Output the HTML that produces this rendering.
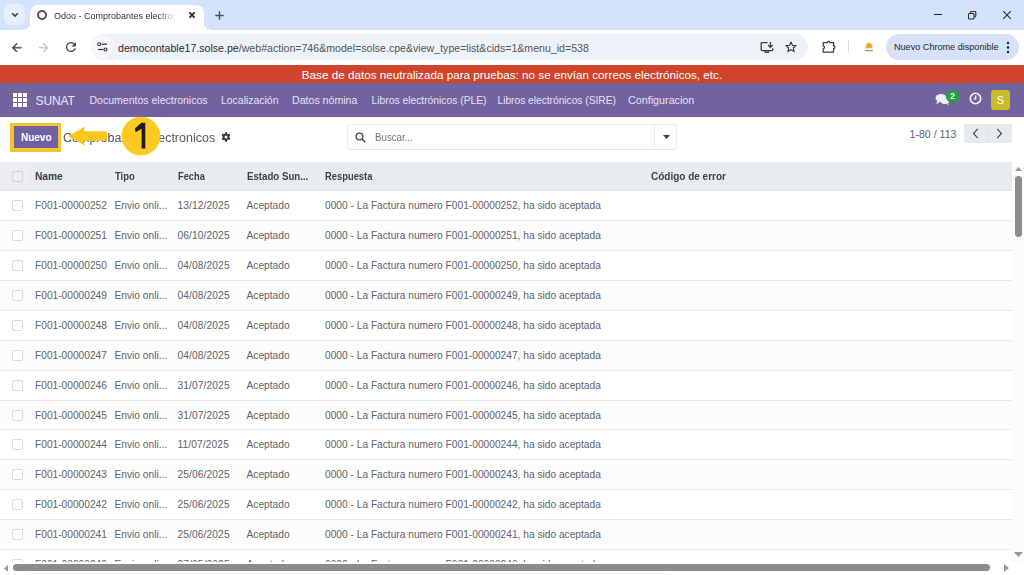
<!DOCTYPE html>
<html><head><meta charset="utf-8">
<style>
*{box-sizing:border-box;margin:0;padding:0}
html,body{width:1024px;height:575px;overflow:hidden;background:#fff;font-family:"Liberation Sans",sans-serif}
.a{position:absolute;white-space:nowrap}
#tabstrip{position:absolute;left:0;top:0;width:1024px;height:30px;background:#d3e3fd}
#toolbar{position:absolute;left:0;top:30px;width:1024px;height:34px;background:#fff}
#banner{position:absolute;left:0;top:65px;width:1024px;height:18px;background:#d0442c;color:#fff;font-size:11.7px;line-height:18px;padding-top:0.5px;text-align:center}
#nav{position:absolute;left:0;top:83px;width:1024px;height:34px;background:#71639e;color:#fff}
#nav .m{position:absolute;top:0px;line-height:34px;font-size:10.5px;color:#e6e1f3}
#cp{position:absolute;left:0;top:117px;width:1024px;height:45px;background:#fff}
#thead{position:absolute;left:0;top:162px;width:1012px;height:29px;background:#e9ecef;border-bottom:1px solid #dee2e6}
.th{position:absolute;top:-0.5px;line-height:29px;font-size:10.2px;font-weight:700;color:#3b414b}
.row{position:absolute;left:0;width:1012px;height:30px;border-bottom:1px solid #e8e9eb}
.row.odd{background:#fcfcfc}
.td{position:absolute;top:0;line-height:29px;font-size:10.2px;color:#5e636c}
.cb{position:absolute;left:12px;width:11px;height:11px;border:1px solid #d8dadd;border-radius:2px;background:#fff}
</style></head><body>
<div id="tabstrip">
  <!-- tab search button -->
  <div class="a" style="left:4px;top:4px;width:21px;height:21px;border-radius:6px;background:#e7effc"></div>
  <svg class="a" style="left:11px;top:12px" width="8" height="6" viewBox="0 0 8 6"><path d="M1.2 1.3 L4 4.1 L6.8 1.3" fill="none" stroke="#3a404e" stroke-width="1.6"/></svg>
  <!-- active tab -->
  <div class="a" style="left:30px;top:5px;width:174px;height:26px;background:#fff;border-radius:8px 8px 0 0"></div>
  <div class="a" style="left:24px;top:23px;width:6px;height:7px;background:radial-gradient(circle at 0 0,#d3e3fd 6px,#fff 6.5px)"></div>
  <div class="a" style="left:204px;top:23px;width:6px;height:7px;background:radial-gradient(circle at 6px 0,#d3e3fd 6px,#fff 6.5px)"></div>
  <div class="a" style="left:36.5px;top:9.5px;width:10.5px;height:10.5px;border-radius:50%;border:2.4px solid #604b5c"></div>
  <div class="a" style="left:54px;top:8.5px;font-size:9.4px;line-height:14px;color:#333;width:129px;transform:scaleX(0.96);transform-origin:0 0;overflow:hidden;-webkit-mask-image:linear-gradient(90deg,#000 84%,transparent 99%)">Odoo - Comprobantes electronicos</div>
  <svg class="a" style="left:188px;top:11px" width="8" height="8" viewBox="0 0 8 8"><path d="M1.4 1.4 L6.6 6.6 M6.6 1.4 L1.4 6.6" stroke="#2a2a2a" stroke-width="1.8"/></svg>
  <svg class="a" style="left:214.5px;top:10.5px" width="9" height="9" viewBox="0 0 9 9"><path d="M4.5 0.3 V8.7 M0.3 4.5 H8.7" stroke="#46546a" stroke-width="1.5"/></svg>
  <!-- window controls -->
  <div class="a" style="left:934px;top:14px;width:8px;height:1px;background:#1f1f1f"></div>
  <svg class="a" style="left:967px;top:10px" width="10" height="10" viewBox="0 0 10 10"><rect x="1.5" y="3.5" width="5.5" height="5.5" rx="0.8" fill="none" stroke="#2b2b2b" stroke-width="1.1"/><path d="M3.5 3.2 V2.3 Q3.5 1.5 4.3 1.5 H8 Q8.8 1.5 8.8 2.3 V6 Q8.8 6.8 8 6.8 H7.3" fill="none" stroke="#2b2b2b" stroke-width="1.1"/></svg>
  <svg class="a" style="left:1002px;top:10px" width="10" height="10" viewBox="0 0 10 10"><path d="M1.2 1.2 L8.8 8.8 M8.8 1.2 L1.2 8.8" stroke="#2b2b2b" stroke-width="1.1"/></svg>
</div>
<div id="toolbar">
  <svg class="a" style="left:12px;top:12.5px" width="9.5" height="9.5" viewBox="4 4 16 16"><path d="M20 11H7.83l5.59-5.59L12 4l-8 8 8 8 1.41-1.41L7.83 13H20v-2z" fill="#454545" stroke="#454545" stroke-width="0.5"/></svg>
  <svg class="a" style="left:38.5px;top:12.5px" width="9.5" height="9.5" viewBox="4 4 16 16"><path d="M4 11h12.17l-5.59-5.59L12 4l8 8-8 8-1.41-1.41L16.17 13H4v-2z" fill="#c2c2c2" stroke="#c2c2c2" stroke-width="0.4"/></svg>
  <svg class="a" style="left:65.5px;top:12px" width="10" height="10" viewBox="4 4 16 16"><path d="M17.65 6.35C16.2 4.9 14.21 4 12 4c-4.42 0-7.99 3.58-7.99 8s3.57 8 7.99 8c3.73 0 6.84-2.55 7.73-6h-2.08c-.82 2.33-3.04 4-5.65 4-3.31 0-6-2.69-6-6s2.69-6 6-6c1.66 0 3.14.69 4.22 1.78L13 11h7V4l-2.35 2.35z" fill="#454545"/></svg>
  <div class="a" style="left:91px;top:4px;width:717px;height:26px;border-radius:13px;background:#edf1f8"></div>
  <div class="a" style="left:92px;top:5px;width:21px;height:24px;border-radius:12px;background:#f6f8fc"></div>
  <svg class="a" style="left:97px;top:12px" width="11" height="10" viewBox="0 0 11 10"><circle cx="2.2" cy="2.2" r="1.5" fill="none" stroke="#333" stroke-width="1.1"/><path d="M4.5 2.2 H10" stroke="#333" stroke-width="1.2"/><circle cx="8.5" cy="7.5" r="1.5" fill="none" stroke="#333" stroke-width="1.1"/><path d="M1 7.5 H6.3" stroke="#333" stroke-width="1.2"/></svg>
  <div class="a" style="left:118px;top:10.5px;font-size:10.6px;line-height:14px;color:#2c2c2c">democontable17.solse.pe<span style="color:#555">/web#action=746&amp;model=solse.cpe&amp;view_type=list&amp;cids=1&amp;menu_id=538</span></div>
  <!-- install icon -->
  <svg class="a" style="left:760px;top:11px" width="14" height="13" viewBox="0 0 14 13"><path d="M7.6 1.6 H2 Q1.2 1.6 1.2 2.4 V8.8 Q1.2 9.6 2 9.6 H12 Q12.8 9.6 12.8 8.8 V7.2" fill="none" stroke="#3c3c3c" stroke-width="1.3"/><path d="M10.4 0.8 V6" stroke="#3c3c3c" stroke-width="1.3"/><path d="M8.1 4 L10.4 6.4 L12.7 4" fill="none" stroke="#3c3c3c" stroke-width="1.3"/><path d="M4.4 11.1 H9.3" stroke="#3c3c3c" stroke-width="1.5"/></svg>
  <svg class="a" style="left:785px;top:11px" width="12" height="12" viewBox="0 0 12 12"><path d="M6 1 L7.4 4.3 L11 4.6 L8.3 7 L9.1 10.6 L6 8.7 L2.9 10.6 L3.7 7 L1 4.6 L4.6 4.3 Z" fill="none" stroke="#333" stroke-width="1.1" stroke-linejoin="round"/></svg>
  <svg class="a" style="left:821px;top:10px" width="15" height="14" viewBox="0 0 15 14"><path d="M2.2 2.6 H6.3 A1.3 1.3 0 0 1 8.9 2.6 H12.6 V5.9 A1.3 1.3 0 0 1 12.6 8.5 V12 H2.2 V8.5 A1.3 1.3 0 0 0 2.2 5.9 Z" fill="none" stroke="#3a3a3a" stroke-width="1.25" stroke-linejoin="round"/></svg>
  <div class="a" style="left:848px;top:10px;width:1px;height:12px;background:#d9deea"></div>
  <svg class="a" style="left:864px;top:11px" width="10" height="11" viewBox="0 0 10 11"><path d="M1.3 7.5 Q1 4 3 2.3 Q5 0.6 7 2.3 Q9 4 8.7 7.5 Z" fill="#f7b347"/><circle cx="5" cy="4.4" r="1.7" fill="#f29a2e"/><path d="M1.2 9.6 H8.8" stroke="#8c8478" stroke-width="1.2"/></svg>
  <div class="a" style="left:886px;top:4px;width:133px;height:26px;border-radius:13px;background:#d6e2fa"></div>
  <div class="a" style="left:894px;top:10px;font-size:9.1px;line-height:14px;color:#1f1f1f">Nuevo Chrome disponible</div>
  <svg class="a" style="left:1006px;top:11px" width="4" height="13" viewBox="0 0 4 13"><circle cx="2" cy="2" r="1.2" fill="#1f1f1f"/><circle cx="2" cy="6.5" r="1.2" fill="#1f1f1f"/><circle cx="2" cy="11" r="1.2" fill="#1f1f1f"/></svg>
</div>
<div id="banner">Base de datos neutralizada para pruebas: no se envían correos electrónicos, etc.</div>
<div id="nav">
  <svg class="a" style="left:13px;top:10px" width="14" height="14" viewBox="0 0 14 14" fill="#fff"><rect x="0" y="0" width="4" height="4"/><rect x="5" y="0" width="4" height="4"/><rect x="10" y="0" width="4" height="4"/><rect x="0" y="5" width="4" height="4"/><rect x="5" y="5" width="4" height="4"/><rect x="10" y="5" width="4" height="4"/><rect x="0" y="10" width="4" height="4"/><rect x="5" y="10" width="4" height="4"/><rect x="10" y="10" width="4" height="4"/></svg>
  <div class="m" style="left:35.5px;top:1px;font-size:12px;color:#ebe7f6;letter-spacing:-0.1px">SUNAT</div>
  <div class="m" style="left:89.5px"><span style="font-size:10.53px">Documentos electronicos</span></div>
  <div class="m" style="left:221px"><span style="font-size:10.45px">Localización</span></div>
  <div class="m" style="left:292px"><span style="font-size:10.6px">Datos nómina</span></div>
  <div class="m" style="left:371.5px"><span style="font-size:10.3px">Libros electrónicos (PLE)</span></div>
  <div class="m" style="left:497.5px"><span style="font-size:10.2px">Libros electrónicos (SIRE)</span></div>
  <div class="m" style="left:628px"><span style="font-size:10.75px">Configuracion</span></div>
  <svg class="a" style="left:935px;top:10px" width="16" height="13" viewBox="0 0 16 13"><ellipse cx="6" cy="5" rx="5.5" ry="4" fill="#eeeef5"/><path d="M2 8 L1.5 11.5 L5 8.5Z" fill="#eeeef5"/><ellipse cx="10" cy="8" rx="4.5" ry="3" fill="#eeeef5"/><path d="M12 10 L14 12.5 L10.5 10.5Z" fill="#eeeef5"/></svg>
  <div class="a" style="left:946px;top:7px;width:13px;height:13px;border-radius:50%;background:#22a33c;color:#eafbe9;font-size:8.8px;font-weight:700;line-height:13px;text-align:center">2</div>
  <svg class="a" style="left:969px;top:9px" width="13" height="13" viewBox="0 0 13 13"><circle cx="6.5" cy="6.5" r="5.2" fill="none" stroke="#f4f1fb" stroke-width="1.6"/><path d="M6.7 3.5 V6.8 H4.5" fill="none" stroke="#fff" stroke-width="1.3"/></svg>
  <div class="a" style="left:991px;top:7px;width:19px;height:20px;border-radius:3px;background:#c9bb2a;color:#fff;font-size:11px;line-height:20px;text-align:center">S</div>
</div>
<div id="cp">
  <div class="a" style="left:10px;top:6px;width:51px;height:29px;background:#f7c22a"></div>
  <div class="a" style="left:13.5px;top:9px;width:44.5px;height:22px;background:#6e61a4;color:#fff;font-weight:700;font-size:10px;line-height:22px;text-align:center;padding-left:1px;padding-top:1px">Nuevo</div>
  <div class="a" style="left:62.5px;top:10.5px;font-size:13.3px;line-height:20px;color:#525863;transform:scaleX(0.94);transform-origin:0 0">Comprobantes electronicos</div>
  <svg class="a" style="left:221px;top:15px" width="10" height="10" viewBox="0 0 16 16"><path fill="#343a40" fill-rule="evenodd" d="M9.4 0.5 l.5 2.2 a5.6 5.6 0 0 1 1.5.9 l2.1-.7 1.5 2.5-1.6 1.5 a5.6 5.6 0 0 1 0 1.8 l1.6 1.5-1.5 2.5-2.1-.7 a5.6 5.6 0 0 1-1.5.9 L9.4 15.5 H6.6 l-.5-2.2 a5.6 5.6 0 0 1-1.5-.9 l-2.1.7-1.5-2.5 1.6-1.5 a5.6 5.6 0 0 1 0-1.8 L1 5.4 2.5 2.9 l2.1.7 a5.6 5.6 0 0 1 1.5-.9 L6.6 0.5Z M8 5.6 a2.4 2.4 0 1 0 0 4.8 a2.4 2.4 0 1 0 0-4.8Z"/></svg>
  <!-- arrow -->
  <svg class="a" style="left:60px;top:0px" width="60" height="40" viewBox="0 0 60 40"><path d="M8 19 L25.5 9.5 Q23.5 12 24 14.3 L44.5 14.3 Q47.5 14.5 47.5 19 Q47.5 23.6 44.5 23.8 L24 23.8 Q23.5 26.5 25.5 29 Z" fill="#fdc61c"/></svg>
  <svg class="a" style="left:120px;top:-2px" width="42" height="42" viewBox="0 0 42 42"><circle cx="20.9" cy="21.1" r="19.4" fill="#fdc81f"/><path d="M21.3 7.8 H25.3 V33.6 H21.6 V13.8 L15.6 17.2 L15 13.6 Z" fill="#1f1d1a"/></svg>
  <!-- search -->
  <div class="a" style="left:347px;top:7px;width:330px;height:26px;border:1px solid #eceef0;border-bottom-color:#e2e4e7;border-radius:3px;background:#fff"></div>
  <div class="a" style="left:654px;top:8px;width:1px;height:24px;background:#eceef0"></div>
  <svg class="a" style="left:355px;top:15px" width="11" height="11" viewBox="0 0 11 11"><circle cx="4.5" cy="4.5" r="3.4" fill="none" stroke="#454a53" stroke-width="1.4"/><path d="M7 7 L10.2 10.2" stroke="#454a53" stroke-width="1.6"/></svg>
  <div class="a" style="left:375px;top:12.5px;font-size:10.8px;line-height:14px;color:#6c717a;transform:scaleX(0.9);transform-origin:0 0">Buscar...</div>
  <svg class="a" style="left:662.5px;top:18px" width="7" height="4" viewBox="0 0 7 4"><path d="M0 0 H7 L3.5 4Z" fill="#3d434c"/></svg>
  <!-- pager -->
  <div class="a" style="left:909.5px;top:10px;font-size:10.6px;line-height:14px;color:#5f656e">1-80 / 113</div>
  <div class="a" style="left:964px;top:7px;width:48px;height:18.5px;background:#e8ebee;border-radius:2px"></div>
  <div class="a" style="left:987px;top:7px;width:1px;height:18px;background:#dfe2e6"></div>
  <svg class="a" style="left:972px;top:11px" width="7" height="11" viewBox="0 0 7 11"><path d="M5.8 0.8 L1.5 5.5 L5.8 10.2" fill="none" stroke="#474d56" stroke-width="1.2"/></svg>
  <svg class="a" style="left:996px;top:11px" width="7" height="11" viewBox="0 0 7 11"><path d="M1.2 0.8 L5.5 5.5 L1.2 10.2" fill="none" stroke="#474d56" stroke-width="1.2"/></svg>
</div>
<div id="thead">
  <div class="a" style="left:0;top:0;width:28px;height:28px;background:#ebedf0"></div><div class="cb" style="top:9px;border-color:#cfd2d6;background:#eceef1"></div>
  <div class="th" style="left:35px">Name</div>
  <div class="th" style="left:114.5px;transform:scaleX(0.92);transform-origin:0 0">Tipo</div>
  <div class="th" style="left:177.5px;transform:scaleX(0.91);transform-origin:0 0">Fecha</div>
  <div class="th" style="left:246.5px;transform:scaleX(0.95);transform-origin:0 0">Estado Sun...</div>
  <div class="th" style="left:325px;transform:scaleX(0.92);transform-origin:0 0">Respuesta</div>
  <div class="th" style="left:650.5px;transform:scaleX(0.98);transform-origin:0 0">Código de error</div>
</div>
<div id="rows">
<div class="row" style="top:191px;height:30px"><div class="cb" style="top:9px"></div><div class="td" style="left:35px">F001-00000252</div><div class="td" style="left:114.5px">Envio onli...</div><div class="td" style="left:177.5px;letter-spacing:0.12px">13/12/2025</div><div class="td" style="left:246.5px">Aceptado</div><div class="td" style="left:325px">0000 - La Factura numero F001-00000252, ha sido aceptada</div></div>
<div class="row odd" style="top:221px;height:30px"><div class="cb" style="top:9px"></div><div class="td" style="left:35px">F001-00000251</div><div class="td" style="left:114.5px">Envio onli...</div><div class="td" style="left:177.5px;letter-spacing:0.12px">06/10/2025</div><div class="td" style="left:246.5px">Aceptado</div><div class="td" style="left:325px">0000 - La Factura numero F001-00000251, ha sido aceptada</div></div>
<div class="row" style="top:251px;height:30px"><div class="cb" style="top:9px"></div><div class="td" style="left:35px">F001-00000250</div><div class="td" style="left:114.5px">Envio onli...</div><div class="td" style="left:177.5px;letter-spacing:0.12px">04/08/2025</div><div class="td" style="left:246.5px">Aceptado</div><div class="td" style="left:325px">0000 - La Factura numero F001-00000250, ha sido aceptada</div></div>
<div class="row odd" style="top:281px;height:30px"><div class="cb" style="top:9px"></div><div class="td" style="left:35px">F001-00000249</div><div class="td" style="left:114.5px">Envio onli...</div><div class="td" style="left:177.5px;letter-spacing:0.12px">04/08/2025</div><div class="td" style="left:246.5px">Aceptado</div><div class="td" style="left:325px">0000 - La Factura numero F001-00000249, ha sido aceptada</div></div>
<div class="row" style="top:311px;height:30px"><div class="cb" style="top:9px"></div><div class="td" style="left:35px">F001-00000248</div><div class="td" style="left:114.5px">Envio onli...</div><div class="td" style="left:177.5px;letter-spacing:0.12px">04/08/2025</div><div class="td" style="left:246.5px">Aceptado</div><div class="td" style="left:325px">0000 - La Factura numero F001-00000248, ha sido aceptada</div></div>
<div class="row odd" style="top:341px;height:30px"><div class="cb" style="top:9px"></div><div class="td" style="left:35px">F001-00000247</div><div class="td" style="left:114.5px">Envio onli...</div><div class="td" style="left:177.5px;letter-spacing:0.12px">04/08/2025</div><div class="td" style="left:246.5px">Aceptado</div><div class="td" style="left:325px">0000 - La Factura numero F001-00000247, ha sido aceptada</div></div>
<div class="row" style="top:371px;height:30px"><div class="cb" style="top:9px"></div><div class="td" style="left:35px">F001-00000246</div><div class="td" style="left:114.5px">Envio onli...</div><div class="td" style="left:177.5px;letter-spacing:0.12px">31/07/2025</div><div class="td" style="left:246.5px">Aceptado</div><div class="td" style="left:325px">0000 - La Factura numero F001-00000246, ha sido aceptada</div></div>
<div class="row odd" style="top:401px;height:29px"><div class="cb" style="top:9px"></div><div class="td" style="left:35px">F001-00000245</div><div class="td" style="left:114.5px">Envio onli...</div><div class="td" style="left:177.5px;letter-spacing:0.12px">31/07/2025</div><div class="td" style="left:246.5px">Aceptado</div><div class="td" style="left:325px">0000 - La Factura numero F001-00000245, ha sido aceptada</div></div>
<div class="row" style="top:430px;height:30px"><div class="cb" style="top:9px"></div><div class="td" style="left:35px">F001-00000244</div><div class="td" style="left:114.5px">Envio onli...</div><div class="td" style="left:177.5px;letter-spacing:0.12px">11/07/2025</div><div class="td" style="left:246.5px">Aceptado</div><div class="td" style="left:325px">0000 - La Factura numero F001-00000244, ha sido aceptada</div></div>
<div class="row odd" style="top:460px;height:30px"><div class="cb" style="top:9px"></div><div class="td" style="left:35px">F001-00000243</div><div class="td" style="left:114.5px">Envio onli...</div><div class="td" style="left:177.5px;letter-spacing:0.12px">25/06/2025</div><div class="td" style="left:246.5px">Aceptado</div><div class="td" style="left:325px">0000 - La Factura numero F001-00000243, ha sido aceptada</div></div>
<div class="row" style="top:490px;height:30px"><div class="cb" style="top:9px"></div><div class="td" style="left:35px">F001-00000242</div><div class="td" style="left:114.5px">Envio onli...</div><div class="td" style="left:177.5px;letter-spacing:0.12px">25/06/2025</div><div class="td" style="left:246.5px">Aceptado</div><div class="td" style="left:325px">0000 - La Factura numero F001-00000242, ha sido aceptada</div></div>
<div class="row odd" style="top:520px;height:30px"><div class="cb" style="top:9px"></div><div class="td" style="left:35px">F001-00000241</div><div class="td" style="left:114.5px">Envio onli...</div><div class="td" style="left:177.5px;letter-spacing:0.12px">25/06/2025</div><div class="td" style="left:246.5px">Aceptado</div><div class="td" style="left:325px">0000 - La Factura numero F001-00000241, ha sido aceptada</div></div>
<div class="row" style="top:550px;height:30px"><div class="cb" style="top:9px"></div><div class="td" style="left:35px">F001-00000240</div><div class="td" style="left:114.5px">Envio onli...</div><div class="td" style="left:177.5px;letter-spacing:0.12px">27/05/2025</div><div class="td" style="left:246.5px">Aceptado</div><div class="td" style="left:325px">0000 - La Factura numero F001-00000240, ha sido aceptada</div></div>
</div><!--/rows-->
<div id="vs" class="a" style="left:1012px;top:162px;width:12px;height:400px;background:#fcfcfc"></div>
<svg class="a" style="left:1015px;top:167px" width="7" height="4" viewBox="0 0 7 4"><path d="M0 4 L3.5 0 L7 4Z" fill="#999"/></svg>
<div class="a" style="left:1015px;top:176px;width:7px;height:61px;border-radius:4px;background:#8c8c8c"></div>
<svg class="a" style="left:1014px;top:552px" width="9" height="5" viewBox="0 0 9 5"><path d="M0 0 L9 0 L4.5 5Z" fill="#999"/></svg>
<div id="hs" class="a" style="left:0;top:562px;width:1024px;height:13px;background:#fff"></div>
<svg class="a" style="left:3.5px;top:564.5px" width="4" height="7" viewBox="0 0 4 7"><path d="M4 0 L0 3.5 L4 7Z" fill="#999"/></svg>
<div class="a" style="left:13px;top:564px;width:977px;height:7px;border-radius:4px;background:#8c8c8c"></div><div class="a" style="left:26px;top:573px;width:640px;height:1px;background:#ececec"></div>
<svg class="a" style="left:1004px;top:564px" width="5" height="8" viewBox="0 0 5 8"><path d="M0 0 L5 4 L0 8Z" fill="#999"/></svg>
</body></html>
